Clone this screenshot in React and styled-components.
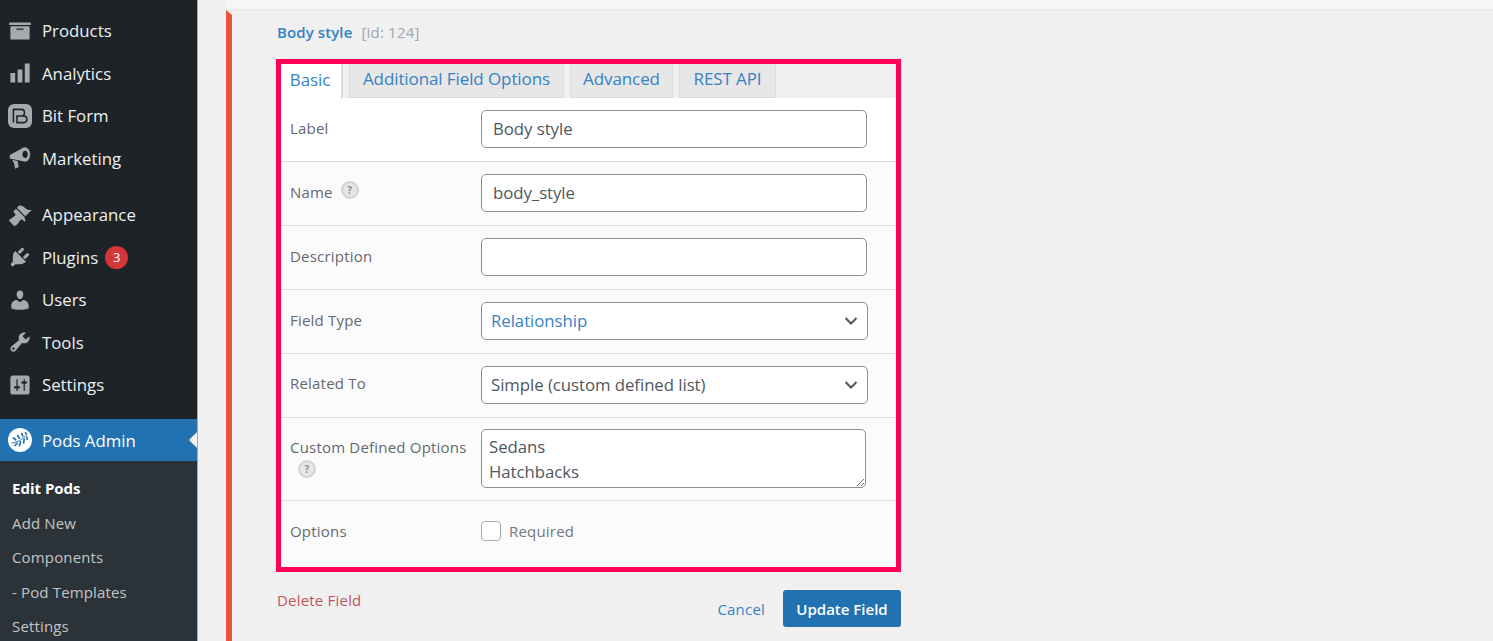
import React from 'react'
import styled, { createGlobalStyle } from 'styled-components'

const font = `"Open Sans", "Noto Sans", "Liberation Sans", sans-serif`
const chevron = `url("data:image/svg+xml,%3Csvg xmlns='http://www.w3.org/2000/svg' width='16' height='16' viewBox='0 0 16 16'%3E%3Cpath d='M2.5 5 8 10.5 13.5 5' fill='none' stroke='%23555' stroke-width='2'/%3E%3C/svg%3E")`

const Global = createGlobalStyle`
  html, body { margin: 0; height: 641px; overflow: hidden; background: #f0f0f1; }
  body { font-family: ${font}; }
  * { box-sizing: border-box; }
`

const Page = styled.div`
  display: flex;
  height: 641px;
  overflow: hidden;
`

const Sidebar = styled.nav`
  flex: 0 0 198px;
  background: #1d2327;
  border-right: 1px solid #a7aaad;
  padding-top: 9.5px;
  display: flex;
  flex-direction: column;
`

const MenuItem = styled.div`
  height: ${({ $active }) => ($active ? '42px' : '42.5px')};
  flex: none;
  display: flex;
  align-items: center;
  position: relative;
  padding-left: 8px;
  gap: 10px;
  font-size: 16.8px;
  color: ${({ $active }) => ($active ? '#fff' : '#eef0f1')};
  background: ${({ $active }) => ($active ? '#2271b1' : 'transparent')};
  margin-top: ${({ $gap }) => $gap || 0}px;
  ${({ $active }) =>
    $active &&
    `&::after {
      content: '';
      position: absolute;
      right: 0;
      top: 50%;
      margin-top: -8px;
      border: 8px solid transparent;
      border-right-color: #f0f0f1;
      border-left-width: 0;
    }`}
`

const MenuIcon = styled.svg`
  width: 24px;
  height: 24px;
  flex: none;
  fill: ${({ $active }) => ($active ? '#fff' : '#a7aaad')};
`

const Badge = styled.span`
  width: 23px;
  height: 23px;
  border-radius: 50%;
  background: #d63638;
  color: #fff;
  font-size: 13px;
  display: flex;
  align-items: center;
  justify-content: center;
  margin-left: -3px;
`

const Submenu = styled.div`
  flex: 1;
  background: #2c3338;
  padding-top: 10px;
`

const SubItem = styled.div`
  height: 34.5px;
  display: flex;
  align-items: center;
  padding-left: 12px;
  font-size: 15px;
  letter-spacing: ${({ $current }) => ($current ? '0' : '0.15px')};
  font-weight: ${({ $current }) => ($current ? 700 : 400)};
  color: ${({ $current }) => ($current ? '#fff' : '#c3c4c7')};
`

const Main = styled.main`
  flex: 1;
  min-width: 0;
  padding-left: 28px;
  display: flex;
  flex-direction: column;
`

const TopStrip = styled.div`
  height: 10px;
  flex: none;
  background: #f6f7f7;
  border-bottom: 1px solid #ececec;
`

const Panel = styled.section`
  flex: 1;
  border-left: 6px solid #e6553a;
  border-top: 5px solid transparent;
  padding: 4px 0 0 44px;
`

const TitleRow = styled.div`
  display: flex;
  align-items: baseline;
  gap: 9px;
  height: 40px;
  padding: 3px 0 0 1px;
`

const FieldName = styled.a`
  color: #3582c4;
  font-size: 15px;
  font-weight: 600;
  letter-spacing: 0.1px;
`

const FieldId = styled.span`
  color: #a0a5aa;
  font-size: 15px;
  letter-spacing: 0.2px;
`

const Highlight = styled.div`
  width: 625px;
  height: 513px;
  border: 5px solid #ff0055;
  display: flex;
  flex-direction: column;
`

const Tabs = styled.div`
  height: 34px;
  flex: none;
  display: flex;
  align-items: flex-end;
  background: #f0f0f1;
`

const Tab = styled.div`
  height: 34px;
  display: flex;
  align-items: center;
  justify-content: center;
  padding: 0 ${({ $active }) => ($active ? '2px' : '0')} 4px 0;
  width: ${({ $w }) => $w}px;
  margin-right: ${({ $mr }) => $mr}px;
  font-size: 17px;
  letter-spacing: -0.1px;
  color: #3582c4;
  background: ${({ $active }) => ($active ? '#fff' : '#e7e7e8')};
  border: 1px solid #dcdcde;
  border-width: ${({ $active }) => ($active ? '0 2px 0 0' : '1px 1px 1px 1px')};
  border-top: none;
`

const Rows = styled.div`
  flex: 1;
  display: flex;
  flex-direction: column;
`

const Row = styled.div`
  height: ${({ $h }) => $h}px;
  flex: ${({ $fill }) => ($fill ? 1 : 'none')};
  display: grid;
  grid-template-columns: 191px 387px;
  align-items: ${({ $top }) => ($top ? 'start' : 'center')};
  padding: ${({ $top }) => ($top ? '11px' : '0')} 0 ${({ $fill }) => ($fill ? '7px' : '0')} 9px;
  background: ${({ $first }) => ($first ? '#fff' : '#fbfbfc')};
  border-top: ${({ $first }) => ($first ? 'none' : '1px solid #dcdcde')};
`

const Label = styled.div`
  font-size: 15px;
  letter-spacing: 0.2px;
  line-height: 24px;
  color: #646970;
  display: ${({ $wrap }) => ($wrap ? 'block' : 'flex')};
  align-items: center;
  gap: 9px;
  margin-top: ${({ $up }) => $up || 0}px;
  padding-top: ${({ $wrap }) => ($wrap ? '6px' : '0')};
`

const Help = styled.span`
  display: flex;
  align-items: center;
  justify-content: center;
  width: 18px;
  height: 18px;
  border-radius: 50%;
  background: #e6e6e6;
  border: 2px solid #d2d2d2;
  color: #8b8f94;
  font-size: 10px;
  font-weight: 700;
  letter-spacing: 0;
  margin: ${({ $block }) => ($block ? '1px 0 0 8px' : '-4px 0 0 -1px')};
`

const controlBase = `
  font-family: ${font};
  font-size: 16.8px;
  letter-spacing: -0.05px;
  background-color: #fff;
  border: 1px solid #8c8f94;
  border-radius: 5px;
  color: #50575e;
  outline: none;
  display: block;
  margin-top: -2px;
`

const Input = styled.input`
  ${controlBase}
  width: 386px;
  height: 38px;
  padding: 0 11px;
`

const Select = styled.select`
  ${controlBase}
  width: 387px;
  height: 38px;
  padding: 0 30px 0 9px;
  appearance: none;
  color: ${({ $link }) => ($link ? '#3582c4' : '#50575e')};
  background-image: ${chevron};
  background-repeat: no-repeat;
  background-position: right 8px center;
`

const Area = styled.textarea`
  ${controlBase}
  width: 385px;
  height: 59px;
  margin-top: 0;
  padding: 4px 7px;
  line-height: 25px;
  overflow: hidden;
`

const CheckLabel = styled.label`
  display: flex;
  align-items: center;
  gap: 8px;
  font-size: 15px;
  letter-spacing: 0.2px;
  color: #72777c;
`

const CheckBox = styled.span`
  width: 20px;
  height: 20px;
  border: 1px solid #a7aaad;
  border-radius: 4px;
  background: #fff;
  flex: none;
`

const Footer = styled.div`
  width: 625px;
  display: flex;
  justify-content: space-between;
  align-items: flex-start;
  padding-top: 18px;
`

const DeleteLink = styled.a`
  font-size: 15px;
  letter-spacing: 0.2px;
  color: #c2555a;
  padding: 0 0 0 1px;
`

const Actions = styled.div`
  display: flex;
  align-items: center;
  gap: 18px;
`

const Cancel = styled.a`
  font-size: 15px;
  letter-spacing: 0.2px;
  color: #3582c4;
`

const UpdateButton = styled.button`
  width: 118px;
  height: 37px;
  border: none;
  border-radius: 3px;
  background: #2271b1;
  color: #fff;
  font-family: ${font};
  font-size: 15px;
  font-weight: 600;
  letter-spacing: 0;
`

const icons = {
  products: <path d="M19 3v2H1V3h18zM2 6h16v11H2V6zm11 3V8H7v1h6z" />,
  analytics: <path d="M18 18V2h-4v16h4zm-6 0V7H8v11h4zm-6 0v-8H2v8h4z" />,
  bitform: (
    <>
      <rect x="0" y="0" width="20" height="20" rx="5" />
      <path
        d="M4.500 15.500V4.500H11a2.700 2.700 0 0 1 0 5.500H7.500v5.500H13a2.700 2.700 0 0 0 0-5.500H9"
        fill="none"
        stroke="#1d2327"
        strokeWidth="1.300"
      />
    </>
  ),
  marketing: (
    <path
      fillRule="evenodd"
      d="M14 1c2.500 0 4.500 2.700 4.500 6s-2 6-4.500 6c-.5 0-1-.1-1.400-.3L1.500 10.500V7.500L12.500 1.400c.5-.3 1-.4 1.500-.4zm.3 3C13 4 12 5.400 12 7s1 3 2.300 3 2.200-1.400 2.200-3-1-3-2.200-3zM3.500 11.500l4.500 1 1 5-3 1.500-1-4.500z"
    />
  ),
  appearance: (
    <path d="M14.480 11.060L7.410 3.990l1.500-1.500c.5-.56 2.300-.47 3.510.32 1.210.8 1.430 1.280 2.910 2.100 1.180.64 2.450 1.260 4.450.85zm-.71.71L6.700 4.700 4.930 6.470c-.39.39-.39 1.020 0 1.410l1.060 1.060c.39.39.39 1.030 0 1.420-.6.6-1.430 1.150-2.210 1.690-.35.26-.7.53-1.010.84C1.430 13.230.4 14.400 1.090 15.090l3.800 3.800c.69.69 1.860-.34 3.220-1.680.31-.31.580-.66.840-1.010.54-.78 1.090-1.610 1.690-2.210.39-.39 1.030-.39 1.420 0l1.060 1.060c.39.39 1.020.39 1.410 0z" />
  ),
  plugins: (
    <path d="M13.110 4.360L9.870 7.600 8 5.730l3.240-3.240c.35-.34 1.050-.2 1.560.32.52.51.66 1.210.31 1.550zm-8 1.770l.91-1.120 9.010 9.010-1.190.84c-.71.71-2.630 1.160-3.820 1.160H6.140L4.900 17.260c-.59.59-1.540.59-2.120 0-.59-.58-.59-1.530 0-2.120l1.240-1.240v-3.880c0-1.130.4-3.190 1.090-3.890zm7.260 3.970l3.240-3.240c.34-.35 1.040-.21 1.550.31.52.51.66 1.210.31 1.550l-3.240 3.250z" />
  ),
  users: (
    <path d="M10 9.250c-2.270 0-2.730-3.440-2.730-3.440C7 4.020 7.820 2 9.970 2c2.160 0 2.980 2.020 2.710 3.810 0 0-.41 3.440-2.68 3.440zm0 2.570L12.720 10c2.390 0 4.520 2.330 4.520 4.530v2.490s-3.650 1.130-7.240 1.130c-3.650 0-7.240-1.130-7.240-1.130v-2.490c0-2.250 1.940-4.480 4.470-4.480z" />
  ),
  tools: (
    <path d="M16.680 9.770c-1.340 1.340-3.300 1.670-4.950.99l-5.410 6.520c-.99.99-2.590.99-3.580 0s-.99-2.590 0-3.570l6.520-5.420c-.68-1.650-.35-3.610.99-4.950 1.280-1.280 3.120-1.620 4.720-1.060l-2.890 2.890 2.820 2.820 2.860-2.870c.53 1.580.18 3.390-1.080 4.650zM3.810 16.210c.4.39 1.040.39 1.430 0 .4-.4.4-1.040 0-1.430-.39-.4-1.030-.4-1.430 0-.39.39-.39 1.030 0 1.430z" />
  ),
  settings: (
    <path d="M18 16V4c0-1.100-.9-2-2-2H4c-1.100 0-2 .9-2 2v12c0 1.100.9 2 2 2h12c1.100 0 2-.9 2-2zM8 11h1c.55 0 1 .45 1 1s-.45 1-1 1H8v1.500c0 .28-.22.5-.5.5s-.5-.22-.5-.5V13H6c-.55 0-1-.45-1-1s.45-1 1-1h1V5.500c0-.28.22-.5.5-.5s.5.22.5.5V11zm5-2h-1c-.55 0-1-.45-1-1s.45-1 1-1h1V5.500c0-.28.22-.5.5-.5s.5.22.5.5V7h1c.55 0 1 .45 1 1s-.45 1-1 1h-1v5.500c0 .28-.22.5-.5.5s-.5-.22-.5-.5V9z" />
  ),
  pods: (
    <>
      <circle cx="10" cy="10" r="10" />
      <g fill="none" stroke="#2271b1" strokeLinecap="round">
        <path d="M3.500 12.500C8 12 12 9.500 16 5.500" strokeWidth="0.800" />
        <path
          d="M6.500 9.800 4.500 8.300M9.500 8.500 8 6.300M12.300 6.800 11.500 4.600M15 5 14.600 3.800M7.500 12.800 5.800 14.600M10.500 11.500 9.500 14.800M13.500 9.300 13 12.500M15.800 7.500 16 9.500"
          strokeWidth="1.400"
        />
      </g>
    </>
  )
}

const menuTop = [
  ['products', 'Products'],
  ['analytics', 'Analytics'],
  ['bitform', 'Bit Form'],
  ['marketing', 'Marketing']
]

const menuBottom = [
  ['appearance', 'Appearance'],
  ['plugins', 'Plugins', 3],
  ['users', 'Users'],
  ['tools', 'Tools'],
  ['settings', 'Settings']
]

const submenu = ['Edit Pods', 'Add New', 'Components', '- Pod Templates', 'Settings']

const tabs = [
  ['Basic', 62, 6, true],
  ['Additional Field Options', 215, 6],
  ['Advanced', 103, 6],
  ['REST API', 97, 0]
]

const Item = ({ icon, label, badge, gap, active }) => (
  <MenuItem $gap={gap} $active={active}>
    <MenuIcon viewBox="0 0 20 20" $active={active}>
      {icons[icon]}
    </MenuIcon>
    {label}
    {badge && <Badge>{badge}</Badge>}
  </MenuItem>
)

const App = () => (
  <>
    <Global />
    <Page>
      <Sidebar>
        {menuTop.map(([icon, label]) => (
          <Item key={label} icon={icon} label={label} />
        ))}
        {menuBottom.map(([icon, label, badge], i) => (
          <Item key={label} icon={icon} label={label} badge={badge} gap={i === 0 ? 14 : 0} />
        ))}
        <Item icon="pods" label="Pods Admin" active gap={13} />
        <Submenu>
          {submenu.map((label, i) => (
            <SubItem key={label} $current={i === 0}>
              {label}
            </SubItem>
          ))}
        </Submenu>
      </Sidebar>
      <Main>
        <TopStrip />
        <Panel>
          <TitleRow>
            <FieldName>Body style</FieldName>
            <FieldId>[id: 124]</FieldId>
          </TitleRow>
          <Highlight>
            <Tabs>
              {tabs.map(([label, w, mr, active]) => (
                <Tab key={label} $w={w} $mr={mr} $active={active}>
                  {label}
                </Tab>
              ))}
            </Tabs>
            <Rows>
              <Row $first $h={63}>
                <Label $up={-4}>Label</Label>
                <Input readOnly value="Body style" />
              </Row>
              <Row $h={64}>
                <Label $up={-4}>
                  Name <Help>?</Help>
                </Label>
                <Input readOnly value="body_style" />
              </Row>
              <Row $h={64}>
                <Label $up={-4}>Description</Label>
                <Input readOnly value="" />
              </Row>
              <Row $h={64}>
                <Label $up={-4}>Field Type</Label>
                <Select $link defaultValue="Relationship">
                  <option>Relationship</option>
                </Select>
              </Row>
              <Row $h={64}>
                <Label $up={-5}>Related To</Label>
                <Select defaultValue="Simple (custom defined list)">
                  <option>Simple (custom defined list)</option>
                </Select>
              </Row>
              <Row $h={83} $top>
                <Label $wrap>
                  Custom Defined Options
                  <Help $block>?</Help>
                </Label>
                <Area readOnly value={'Sedans\nHatchbacks'} />
              </Row>
              <Row $fill>
                <Label>Options</Label>
                <CheckLabel>
                  <CheckBox />
                  Required
                </CheckLabel>
              </Row>
            </Rows>
          </Highlight>
          <Footer>
            <DeleteLink>Delete Field</DeleteLink>
            <Actions>
              <Cancel>Cancel</Cancel>
              <UpdateButton>Update Field</UpdateButton>
            </Actions>
          </Footer>
        </Panel>
      </Main>
    </Page>
  </>
)

export default App
